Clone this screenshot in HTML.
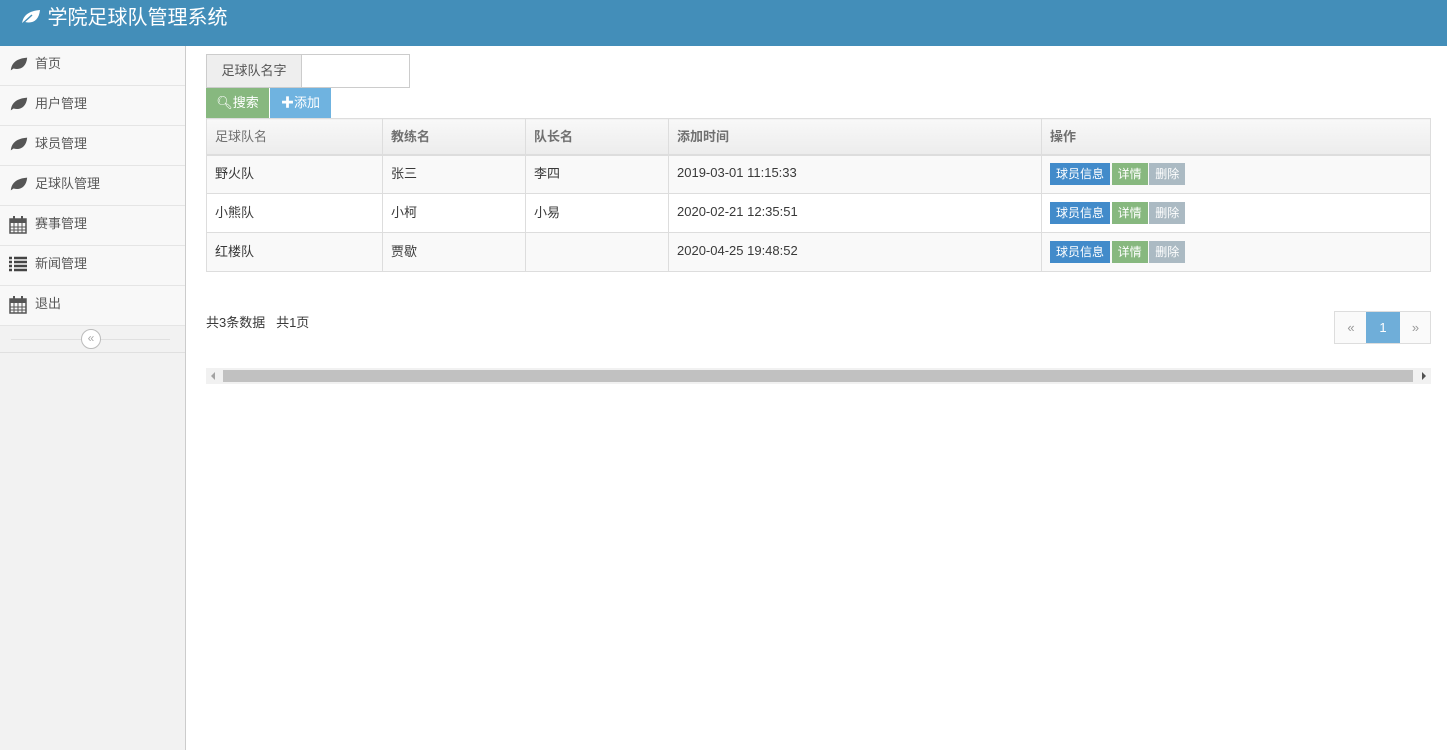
<!DOCTYPE html>
<html><head><meta charset="utf-8"><style>
*{box-sizing:border-box;margin:0;padding:0}
body{width:1447px;height:750px;overflow:hidden;background:#fff;font-family:"Liberation Sans","Noto Sans CJK SC",sans-serif;font-size:13px;color:#393939;position:relative}
.hd{position:absolute;left:0;top:0;width:1447px;height:46px;background:#438eb9;color:#fff;font-size:20px;line-height:36px;padding-left:20px}
.sb{position:absolute;left:0;top:46px;width:186px;height:704px;background:#f2f2f2;border-right:1px solid #ccc}
.it{height:40px;background:#f8f8f8;border-bottom:1px solid #e5e5e5;line-height:36px;padding-left:35px;position:relative;color:#585858;font-size:13px}
.it svg{position:absolute;left:9px;top:10px}
.tog{height:27px;border-bottom:1px solid #e0e0e0;position:relative}
.tog:before{content:"";position:absolute;left:11px;right:15px;top:13px;border-top:1px solid #e0e0e0}
.tog span{position:absolute;left:81px;top:3px;width:20px;height:20px;border:1px solid #bbb;border-radius:50%;background:#fff;font-size:12px;line-height:17px;text-align:center;color:#aaa}
.abs{position:absolute}
table{position:absolute;left:206px;top:118px;width:1225px;border-collapse:collapse}
td,th{border:1px solid #ddd;padding:0 8px 4px;text-align:left;font-weight:normal;height:39px}
th{height:36px;padding-bottom:2px;background:linear-gradient(#f8f8f8,#ececec);color:#707070;font-weight:bold;border-bottom:2px solid #ddd}
tr.o td{background:#f9f9f9}
td .b{position:relative;top:2px}
.b{display:inline-block;height:22px;line-height:22px;color:#fff;padding:0 6px;font-size:12px;margin-right:-2px}
</style></head><body>
<div class="hd"><svg width="22" height="16" viewBox="0 0 22 16" style="vertical-align:-1px"><path d="M2 15C3 6 9 2 20 1 19 11 13 15 5 13" fill="#fff"/><path d="M2 15L12 6" stroke="#438eb9" stroke-width="1.5"/></svg> 学院足球队管理系统</div>
<div class="sb">
<div class="it"><svg width="20" height="16" viewBox="0 0 22 16"><path d="M2 15C3 6 9 2 20 1 19 11 13 15 5 13" fill="#555"/></svg>首页</div>
<div class="it"><svg width="20" height="16" viewBox="0 0 22 16"><path d="M2 15C3 6 9 2 20 1 19 11 13 15 5 13" fill="#555"/></svg>用户管理</div>
<div class="it"><svg width="20" height="16" viewBox="0 0 22 16"><path d="M2 15C3 6 9 2 20 1 19 11 13 15 5 13" fill="#555"/></svg>球员管理</div>
<div class="it"><svg width="20" height="16" viewBox="0 0 22 16"><path d="M2 15C3 6 9 2 20 1 19 11 13 15 5 13" fill="#555"/></svg>足球队管理</div>
<div class="it"><svg width="18" height="18" viewBox="0 0 18 18"><rect x="1" y="3" width="16" height="14" fill="none" stroke="#555" stroke-width="1.5"/><rect x="1" y="3" width="16" height="4" fill="#555"/><path d="M5 7v10M9 7v10M13 7v10M1 11h16M1 14h16" stroke="#555"/><rect x="4" y="0" width="2" height="4" fill="#555"/><rect x="12" y="0" width="2" height="4" fill="#555"/></svg>赛事管理</div>
<div class="it"><svg width="18" height="16" viewBox="0 0 18 16"><path d="M0 2h3M5 2h13M0 6h3M5 6h13M0 10h3M5 10h13M0 14h3M5 14h13" stroke="#444" stroke-width="2.5"/></svg>新闻管理</div>
<div class="it"><svg width="18" height="18" viewBox="0 0 18 18"><rect x="1" y="3" width="16" height="14" fill="none" stroke="#555" stroke-width="1.5"/><rect x="1" y="3" width="16" height="4" fill="#555"/><path d="M5 7v10M9 7v10M13 7v10M1 11h16M1 14h16" stroke="#555"/><rect x="4" y="0" width="2" height="4" fill="#555"/><rect x="12" y="0" width="2" height="4" fill="#555"/></svg>退出</div>
<div class="tog"><span>«</span></div>
</div>
<div class="abs" style="left:206px;top:54px;width:96px;height:34px;background:#eee;border:1px solid #ccc;line-height:32px;text-align:center;color:#555">足球队名字</div>
<div class="abs" style="left:301px;top:54px;width:109px;height:34px;border:1px solid #ccc;border-left:none"></div>
<div class="abs" style="left:206px;top:88px;width:63px;height:30px;background:#87b87f;color:#fff;line-height:30px;text-align:center">&#x1F50D;&#xFE0E;搜索</div>
<div class="abs" style="left:270px;top:88px;width:61px;height:30px;background:#6fb3e0;color:#fff;line-height:30px;text-align:center"><b>✚</b>添加</div>
<table>
<tr><th style="width:176px;font-weight:normal">足球队名</th><th style="width:143px">教练名</th><th style="width:143px">队长名</th><th style="width:373px">添加时间</th><th>操作</th></tr>
<tr class="o"><td>野火队</td><td>张三</td><td>李四</td><td>2019-03-01 11:15:33</td><td><span class="b" style="background:#428bca">球员信息</span> <span class="b" style="background:#87b87f">详情</span> <span class="b" style="background:#abbac3">删除</span></td></tr>
<tr><td>小熊队</td><td>小柯</td><td>小易</td><td>2020-02-21 12:35:51</td><td><span class="b" style="background:#428bca">球员信息</span> <span class="b" style="background:#87b87f">详情</span> <span class="b" style="background:#abbac3">删除</span></td></tr>
<tr class="o"><td>红楼队</td><td>贾歇</td><td></td><td>2020-04-25 19:48:52</td><td><span class="b" style="background:#428bca">球员信息</span> <span class="b" style="background:#87b87f">详情</span> <span class="b" style="background:#abbac3">删除</span></td></tr>
</table>
<div class="abs" style="left:206px;top:312px">共3条数据 &nbsp;&nbsp;共1页</div>
<div class="abs" style="left:1334px;top:311px;width:97px;height:33px;border:1px solid #ddd;background:#fafafa;color:#999">
<span class="abs" style="left:0;width:32px;line-height:31px;text-align:center">«</span>
<span class="abs" style="left:31px;width:34px;height:31px;background:#6faed9;color:#fff;line-height:31px;text-align:center">1</span>
<span class="abs" style="left:65px;width:31px;line-height:31px;text-align:center">»</span></div>
<div class="abs" style="left:206px;top:368px;width:1225px;height:16px;background:#f1f1f1">
<div class="abs" style="left:17px;top:2px;width:1190px;height:12px;background:#c1c1c1"></div>
<span class="abs" style="left:5px;top:4px;border:4px solid transparent;border-right:4px solid #a3a3a3;border-left:0"></span>
<span class="abs" style="right:5px;top:4px;border:4px solid transparent;border-left:4px solid #505050;border-right:0"></span></div>
</body></html>
